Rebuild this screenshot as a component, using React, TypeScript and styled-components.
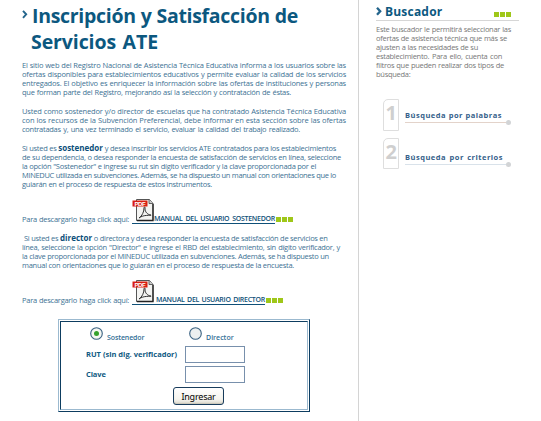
import React from "react";
import styled, { createGlobalStyle } from "styled-components";

const Global = createGlobalStyle`
  * { box-sizing: border-box; }
  body { margin: 0; background: #fff; }
`;

const Page = styled.div`
  display: flex;
  width: 541px;
  height: 421px;
  overflow: hidden;
  background: #fff;
  font-family: "Open Sans", "Noto Sans", sans-serif;
`;

const Main = styled.main`
  width: 359px;
  height: 421px;
  flex: none;
  padding: 2px 0 0 22px;
  border-right: 1px solid #d4d4d4;
`;

const Title = styled.h1`
  display: grid;
  grid-template-columns: 10px 1fr;
  margin: 0;
  height: 59px;
  color: #0c587f;
`;

const TitleLines = styled.div`
  display: flex;
  flex-direction: column;
`;

const Line = styled.span<{ $w: number; $size?: number; $lh?: number; $ls?: number; $indent?: number }>`
  display: block;
  width: ${(p) => p.$w}px;
  margin-left: ${(p) => p.$indent ?? 0}px;
  font-size: ${(p) => p.$size ?? 7.5}px;
  line-height: ${(p) => p.$lh ?? 9}px;
  letter-spacing: ${(p) => p.$ls ?? -0.27}px;
  white-space: nowrap;
  text-align: justify;
  text-align-last: justify;
`;

const Paragraph = styled.p`
  margin: 0 0 10px;
  color: #3d7294;
  b { color: #0c4f7a; font-size: 8px; line-height: 0; letter-spacing: 0; }
`;

const Download = styled.div<{ $gap: number }>`
  display: flex;
  align-items: flex-end;
  height: 25px;
  margin-bottom: ${(p) => p.$gap}px;
  color: #3d7294;
`;

const ManualLink = styled.a`
  display: flex;
  align-items: flex-end;
  height: 25px;
  margin-left: 3px;
  border-bottom: 1px solid #0f5078;
  color: #0f5078;
  font-weight: 600;
  svg { align-self: flex-start; }
`;

const Squares = styled.span<{ $size: number }>`
  display: flex;
  gap: 1px;
  i { width: ${(p) => p.$size}px; height: ${(p) => p.$size}px; background: #9fc719; }
`;

const DownloadSquares = styled(Squares)`
  margin: 0 0 2px 1px;
`;

const Login = styled.form`
  width: 252px;
  height: 93px;
  margin-left: 36px;
  border: 1px solid #0d3d60;
  border-left-color: #9bb9cf;
  border-top-color: #9bb9cf;
  padding: 1px;
`;

const LoginInner = styled.div`
  height: 89px;
  border: 1px solid #9bb9cf;
  border-left-color: #0d3d60;
  border-top-color: #0d3d60;
  padding: 4px 0 0 25px;
`;

const RoleRow = styled.div`
  display: grid;
  grid-template-columns: 99px 1fr;
  height: 20px;
`;

const Role = styled.label`
  display: flex;
  gap: 4px;
  padding: 1px 0 0 4px;
  color: #336f96;
  font-weight: 600;
`;

const RoleText = styled.span`
  padding-top: 6px;
`;

const Field = styled.label`
  display: grid;
  grid-template-columns: 99px 60px;
  height: 20px;
  color: #0f5a82;
  font-weight: 700;
`;

const FieldText = styled.span`
  padding-top: 4px;
`;

const Input = styled.input`
  width: 60px;
  height: 17px;
  padding: 0 2px;
  border: 1px solid #7890ac;
  background: #fff;
  border-radius: 0;
`;

const Submit = styled.button`
  display: block;
  width: 51px;
  height: 18px;
  margin: 1px 0 0 87px;
  padding: 0;
  border: 1px solid #183c5c;
  border-radius: 3px;
  background: linear-gradient(#fff, #f5f4ee 70%, #dcd9cf);
  box-shadow: inset 0 -1px 1px #cbc7ba;
  color: #000;
  font: 9px/15px "Noto Sans", sans-serif;
  letter-spacing: -0.2px;
`;

const Sidebar = styled.aside`
  flex: 1;
  padding: 4px 0 0 17px;
`;

const SideHeader = styled.header`
  display: flex;
  width: 143px;
  height: 17px;
  border-bottom: 1px solid #d6d6d6;
  color: #0c587f;
`;

const SideTitle = styled.h2`
  margin: 0 0 0 3px;
  width: 109px;
`;

const SideSquares = styled(Squares)`
  padding-top: 8px;
`;

const Intro = styled.p`
  margin: 4px 0 20px;
  color: #777;
`;

const Option = styled.a`
  display: flex;
  gap: 6px;
  height: 39px;
  padding-left: 7px;
  color: #34608a;
  font-weight: 700;
`;

const Digit = styled.span<{ $h: number }>`
  width: 16px;
  height: ${(p) => p.$h}px;
  border: 1px solid #dedede;
  border-top-left-radius: 5px;
  color: #cfcfcf;
  font: 700 20px/25px "Open Sans", sans-serif;
  text-align: right;
  padding-right: 1px;
`;

const OptionLabel = styled.span<{ $top: number }>`
  display: block;
  height: 9px;
  width: 106px;
  margin-top: ${(p) => p.$top}px;
`;

const Underline = styled.span<{ $color: string }>`
  display: flex;
  align-items: center;
  width: 106px;
  height: 5px;
  &::before { content: ""; flex: 1; height: 1px; background: ${(p) => p.$color}; }
  &::after { content: ""; width: 5px; height: 5px; border-radius: 50%; background: #d2d4d6; }
`;

const Chevron = ({ top, width = 1.9 }: { top: number; width?: number }) => (
  <svg width="6" height={top + 9} viewBox={`0 ${-top} 6 ${top + 9}`}>
    <path d="M1 0.8 L4.2 4.3 L1 7.8" fill="none" stroke="#24658c" strokeWidth={width} />
  </svg>
);

const Pdf = () => (
  <svg width="22" height="23" viewBox="0 1 22 23">
    <path d="M4.5 1.5h13l3.5 4v17H4.5z" fill="#f4f4f2" stroke="#555" />
    <path d="M21 6v16.5H5" fill="none" stroke="#222" strokeWidth="1.3" />
    <path d="M17 1.5v4h4" fill="#ccc" stroke="#444" strokeWidth=".8" />
    <path d="M7 20c3-2 5-6 5-10 0-2 1.5-1 1 1 0 3 3 6 6 6 1 1-7-1-12 3z" fill="none" stroke="#333" strokeWidth="1" />
    <rect x="0.5" y="2.5" width="15" height="6" fill="#d81f12" />
    <text x="2.6" y="7.7" fontSize="6" fontWeight="700" fill="#fff" fontFamily="Liberation Sans" textLength="11">PDF</text>
  </svg>
);

const Radio = ({ on }: { on?: boolean }) => (
  <svg width="13" height="13" viewBox="0 0 13 13">
    <circle cx="6.5" cy="6.5" r="5.8" fill={on ? "#f5f7f2" : "#edf0f0"} stroke="#396181" strokeWidth="1.1" />
    {on && <circle cx="6.5" cy="6.5" r="2.5" fill="#35a12c" />}
  </svg>
);

const Trio = () => (<><i /><i /><i /></>);

export default function App() {
  return (
    <Page>
      <Global />
      <Main>
        <Title>
          <Chevron top={8} />
          <TitleLines>
            <Line $w={266} $size={19.5} $lh={27} $ls={-0.3}>Inscripción y Satisfacción de</Line>
            <Line $w={127} $size={19.5} $lh={26} $ls={-0.1} $indent={-1}>Servicios ATE</Line>
          </TitleLines>
        </Title>
        <Paragraph>
          <Line $w={324} $ls={-0.18}>El sitio web del Registro Nacional de Asistencia Técnica Educativa informa a los usuarios sobre las</Line>
          <Line $w={324} $ls={-0.2}>ofertas disponibles para establecimientos educativos y permite evaluar la calidad de los servicios</Line>
          <Line $w={324} $ls={-0.2}>entregados. El objetivo es enriquecer la información sobre las ofertas de instituciones y personas</Line>
          <Line $w={269}>que forman parte del Registro, mejorando así la selección y contratación de éstas.</Line>
        </Paragraph>
        <Paragraph>
          <Line $w={324} $ls={-0.15}>Usted como sostenedor y/o director de escuelas que ha contratado Asistencia Técnica Educativa</Line>
          <Line $w={324} $ls={-0.1}>con los recursos de la Subvención Preferencial, debe informar en esta sección sobre las ofertas</Line>
          <Line $w={278}>contratadas y, una vez terminado el servicio, evaluar la calidad del trabajo realizado.</Line>
        </Paragraph>
        <Paragraph>
          <Line $w={314}>Si usted es <b>sostenedor</b> y desea inscribir los servicios ATE contratados para los establecimientos</Line>
          <Line $w={319}>de su dependencia, o desea responder la encuesta de satisfacción de servicios en línea, seleccione</Line>
          <Line $w={294}>la opción "Sostenedor" e ingrese su rut sin dígito verificador y la clave proporcionada por el</Line>
          <Line $w={314} $ls={-0.34}>MINEDUC utilizada en subvenciones. Además, se ha dispuesto un manual con orientaciones que lo</Line>
          <Line $w={190}>guiarán en el proceso de respuesta de estos instrumentos.</Line>
        </Paragraph>
        <Download $gap={10}>
          <Line $w={107}>Para descargarlo haga click aquí:</Line>
          <ManualLink><Pdf /><Line $w={121} $lh={8} $size={7}>MANUAL DEL USUARIO SOSTENEDOR</Line></ManualLink>
          <DownloadSquares $size={5}><Trio /></DownloadSquares>
        </Download>
        <Paragraph>
          <Line $w={303} $indent={2}>Si usted es <b>director</b> o directora y desea responder la encuesta de satisfacción de servicios en</Line>
          <Line $w={318}>línea, seleccione la opción "Director" e ingrese el RBD del establecimiento, sin dígito verificador, y</Line>
          <Line $w={303}>la clave proporcionada por el MINEDUC utilizada en subvenciones. Además, se ha dispuesto un</Line>
          <Line $w={272}>manual con orientaciones que lo guiarán en el proceso de respuesta de la encuesta.</Line>
        </Paragraph>
        <Download $gap={14}>
          <Line $w={107}>Para descargarlo haga click aquí:</Line>
          <ManualLink><Pdf /><Line $w={109} $lh={8} $size={7} $indent={2}>MANUAL DEL USUARIO DIRECTOR</Line></ManualLink>
          <DownloadSquares $size={5}><Trio /></DownloadSquares>
        </Download>
        <Login>
          <LoginInner>
            <RoleRow>
              <Role><Radio on /><RoleText><Line $w={37} $size={7} $ls={-0.1}>Sostenedor</Line></RoleText></Role>
              <Role><Radio /><RoleText><Line $w={28} $size={7} $ls={0}>Director</Line></RoleText></Role>
            </RoleRow>
            <Field><FieldText><Line $w={91} $ls={0}>RUT (sin dig. verificador)</Line></FieldText><Input /></Field>
            <Field><FieldText><Line $w={20} $ls={-0.1}>Clave</Line></FieldText><Input type="password" /></Field>
            <Submit type="button">Ingresar</Submit>
          </LoginInner>
        </Login>
      </Main>
      <Sidebar>
        <SideHeader>
          <Chevron top={3} width={2.3} />
          <SideTitle><Line $w={57} $size={12} $lh={16} $ls={0.2}>Buscador</Line></SideTitle>
          <SideSquares $size={5}><Trio /></SideSquares>
        </SideHeader>
        <Intro>
          <Line $w={135}>Este buscador le permitirá seleccionar las</Line>
          <Line $w={131}>ofertas de asistencia técnica que más se</Line>
          <Line $w={102}>ajusten a las necesidades de su</Line>
          <Line $w={126}>establecimiento. Para ello, cuenta con</Line>
          <Line $w={128}>filtros que pueden realizar dos tipos de</Line>
          <Line $w={33}>búsqueda:</Line>
        </Intro>
        <Option>
          <Digit $h={32}>1</Digit>
          <div>
            <OptionLabel $top={12}><Line $w={97} $ls={0.5}>Búsqueda por palabras</Line></OptionLabel>
            <Underline $color="#e3d3ca" />
          </div>
        </Option>
        <Option>
          <Digit $h={31}>2</Digit>
          <div>
            <OptionLabel $top={15}><Line $w={98} $ls={0.5}>Búsqueda por criterios</Line></OptionLabel>
            <Underline $color="#d9e2ea" />
          </div>
        </Option>
      </Sidebar>
    </Page>
  );
}
